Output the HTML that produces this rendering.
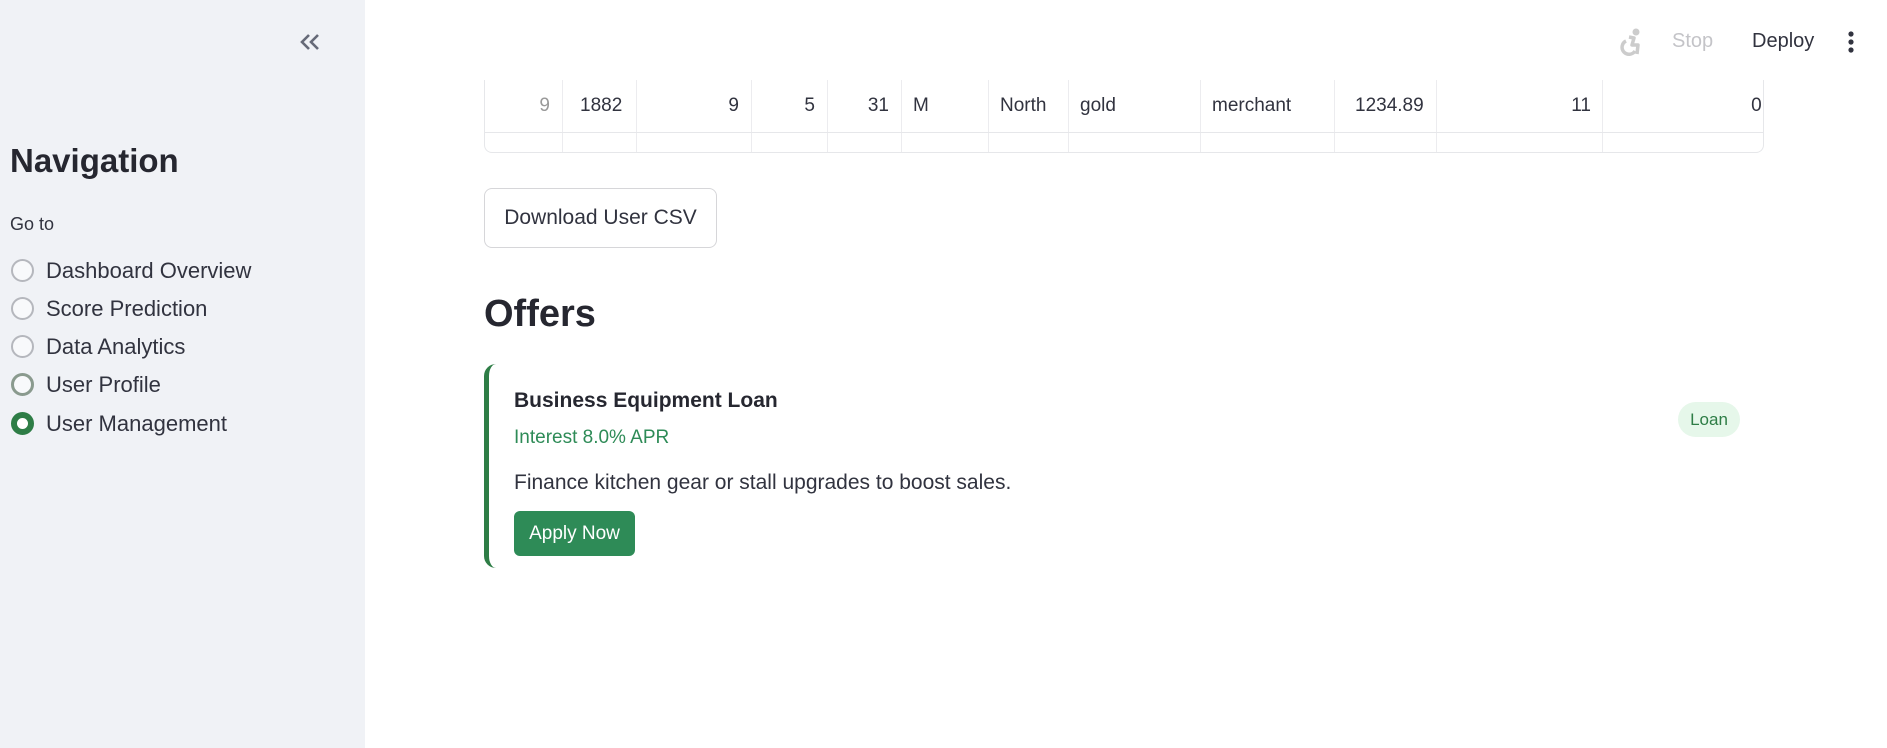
<!DOCTYPE html>
<html><head><meta charset="utf-8"><style>
*{box-sizing:border-box;margin:0;padding:0}
body{width:1887px;height:748px;overflow:hidden;background:#fff;font-family:"Liberation Sans",sans-serif;color:#31333f;position:relative}
.side{position:absolute;left:0;top:0;width:365px;height:748px;background:#f0f2f6}
.abs{position:absolute;white-space:nowrap}
.radio{position:absolute;left:11px;width:23px;height:23px;border-radius:50%;border:2px solid #b5b7bd;background:#f8f9fb}
.rl{position:absolute;left:46px;font-size:22px;line-height:26px}
.tbl{position:absolute;left:484px;top:80px;width:1280px;height:73px;border:1px solid #e6e7ea;border-top:none;border-radius:0 0 8px 8px;overflow:hidden}
.vl{position:absolute;top:0;bottom:0;width:1px;background:#ececef}
.cell{position:absolute;top:14px;font-size:19px;line-height:24px}
</style></head><body>
<div class="side">
 <svg class="abs" style="left:298px;top:32px" width="24" height="20" viewBox="0 0 24 20"><path d="M11 3 4 10l7 7M20 3l-7 7 7 7" stroke="#666a78" stroke-width="2.6" fill="none"/></svg>
 <div class="abs" style="left:10px;top:142px;font-size:33px;font-weight:bold;color:#262730">Navigation</div>
 <div class="abs" style="left:10px;top:214px;font-size:18px">Go to</div>
 <div class="radio" style="top:259px"></div><div class="rl" style="top:258px">Dashboard Overview</div>
 <div class="radio" style="top:297px"></div><div class="rl" style="top:296px">Score Prediction</div>
 <div class="radio" style="top:335px"></div><div class="rl" style="top:334px">Data Analytics</div>
 <div class="radio" style="top:373px;border:3px solid #8a9a8e"></div><div class="rl" style="top:372px">User Profile</div>
 <div class="radio" style="top:412px;border:6px solid #2e7d46;background:#fff"></div><div class="rl" style="top:411px">User Management</div>
</div>
<svg class="abs" style="left:1617px;top:28px" width="28" height="30" viewBox="0 0 28 30"><circle cx="19" cy="4" r="3.5" fill="#ccc"/><path d="M9 13a7 7 0 1 0 9 10" stroke="#ccc" stroke-width="3.5" fill="none"/><path d="M12 9l5 1-2 7h6l-1 9" stroke="#ccc" stroke-width="3.5" fill="none" stroke-linejoin="round"/></svg>
<div class="abs" style="left:1672px;top:30px;font-size:20px;color:#c4c4c8">Stop</div>
<div class="abs" style="left:1752px;top:30px;font-size:20px;color:#31333f">Deploy</div>
<svg class="abs" style="left:1845px;top:30px" width="12" height="26"><circle cx="6" cy="4" r="2.6" fill="#31333f"/><circle cx="6" cy="12" r="2.6" fill="#31333f"/><circle cx="6" cy="20" r="2.6" fill="#31333f"/></svg>
<div class="tbl">
 <div class="vl" style="left:77px"></div><div class="vl" style="left:151px"></div><div class="vl" style="left:266px"></div><div class="vl" style="left:342px"></div><div class="vl" style="left:416px"></div><div class="vl" style="left:503px"></div><div class="vl" style="left:583px"></div><div class="vl" style="left:715px"></div><div class="vl" style="left:849px"></div><div class="vl" style="left:951px"></div><div class="vl" style="left:1117px"></div>
 <div class="abs" style="left:0;right:0;top:52px;height:1px;background:#e6e7ea"></div>
 <div class="cell" style="right:1213px;color:#999">9</div>
 <div class="cell" style="left:95px">1882</div>
 <div class="cell" style="right:1024px">9</div>
 <div class="cell" style="right:948px">5</div>
 <div class="cell" style="right:874px">31</div>
 <div class="cell" style="left:428px">M</div>
 <div class="cell" style="left:515px">North</div>
 <div class="cell" style="left:595px">gold</div>
 <div class="cell" style="left:727px">merchant</div>
 <div class="cell" style="left:870px">1234.89</div>
 <div class="cell" style="right:172px">11</div>
 <div class="cell" style="right:-4px">0.</div>
</div>
<div class="abs" style="left:484px;top:188px;width:233px;height:60px;border:1px solid #d6d6d9;border-radius:8px;font-size:21px;line-height:58px;text-align:center">Download User CSV</div>
<div class="abs" style="left:484px;top:293px;font-size:38px;font-weight:bold;color:#262730">Offers</div>
<div class="abs" style="left:484px;top:364px;width:14px;height:204px;border-left:5px solid #2e7d46;border-radius:12px 0 0 12px"></div>
<div class="abs" style="left:514px;top:389px;font-size:21px;font-weight:bold;color:#262730">Business Equipment Loan</div>
<div class="abs" style="left:514px;top:427px;font-size:19px;color:#2e8b57">Interest 8.0% APR</div>
<div class="abs" style="left:514px;top:471px;font-size:21px">Finance kitchen gear or stall upgrades to boost sales.</div>
<div class="abs" style="left:514px;top:511px;width:121px;height:45px;background:#2e8b57;border-radius:6px;color:#fff;font-size:19px;line-height:45px;text-align:center">Apply Now</div>
<div class="abs" style="left:1678px;top:402px;width:62px;height:35px;background:#e6f7ea;border-radius:18px;color:#2e7d46;font-size:17px;line-height:35px;text-align:center">Loan</div>
</body></html>
